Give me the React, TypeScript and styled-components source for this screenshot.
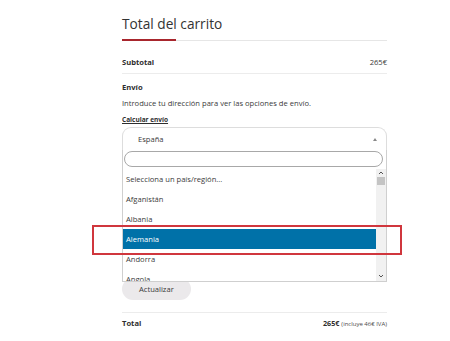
import styled, { createGlobalStyle } from 'styled-components';

const GlobalStyle = createGlobalStyle`
  body {
    margin: 0;
    background: #ffffff;
    font-family: "Open Sans", "Liberation Sans", sans-serif;
    color: #3a3a3a;
  }
`;

const Page = styled.div`
  position: relative;
  width: 450px;
  height: 341px;
  overflow: hidden;
  background: #ffffff;
`;

const Column = styled.div`
  width: 265px;
  margin-left: 122px;
`;

const TitleWrap = styled.div`
  position: relative;
  padding: 15px 0 8px;
  border-bottom: 1px solid #e6e6e6;
  &::after {
    content: '';
    position: absolute;
    left: 0;
    bottom: -1px;
    width: 54px;
    height: 2px;
    background: #a8262d;
  }
`;

const Title = styled.h2`
  margin: 0;
  font-size: 13.7px;
  line-height: 17px;
  font-weight: 400;
  color: #333333;
`;

const Row = styled.div<{ $top: number; $bottom: number; $border?: boolean }>`
  display: flex;
  justify-content: space-between;
  align-items: baseline;
  padding: ${(p) => p.$top}px 0 ${(p) => p.$bottom}px;
  line-height: 10px;
  font-size: 7.6px;
  border-bottom: ${(p) => (p.$border ? '1px solid #ececec' : 'none')};
`;

const Strong = styled.span`
  font-weight: 700;
  color: #2e2e2e;
`;

const Amount = styled.span`
  color: #3a3a3a;
`;

const Shipping = styled.div`
  padding: 8px 0 12px;
  border-bottom: 1px solid #ececec;
  font-size: 7.6px;
  line-height: 10px;
`;

const Label = styled.div`
  font-weight: 700;
  color: #2e2e2e;
`;

const Note = styled.p`
  margin: 6px 0 0;
  color: #3a3a3a;
`;

const CalcLink = styled.a`
  display: inline-block;
  margin-top: 7px;
  font-size: 6.5px;
  font-weight: 700;
  color: #2e2e2e;
  text-decoration: underline;
  text-underline-offset: 1px;
`;

const Form = styled.div`
  display: flex;
  flex-direction: column;
  gap: 10px;
  margin-top: 2px;
`;

const SelectWrap = styled.div`
  position: relative;
  z-index: 10;
`;

const SelectBox = styled.div`
  display: flex;
  align-items: center;
  justify-content: space-between;
  box-sizing: border-box;
  height: 23px;
  padding: 0 9px 0 15px;
  border: 1px solid #dddddd;
  border-bottom: none;
  border-radius: 9px 9px 0 0;
  color: #3a3a3a;
  font-size: 7.6px;
`;

const Caret = styled.span`
  width: 0;
  height: 0;
  border-left: 2px solid transparent;
  border-right: 2px solid transparent;
  border-bottom: 3px solid #888888;
`;

const Dropdown = styled.div`
  position: absolute;
  top: 100%;
  left: 0;
  right: 0;
  box-sizing: border-box;
  height: 132px;
  background: #ffffff;
  border: 1px solid #cfcfcf;
  border-top: none;
  display: flex;
  flex-direction: column;
`;

const SearchWrap = styled.div`
  padding: 1px 3px 2px 1px;
`;

const Search = styled.input`
  display: block;
  box-sizing: border-box;
  width: 100%;
  height: 16px;
  border: 1px solid #a8a8a8;
  border-radius: 8px;
  outline: none;
  background: #ffffff;
`;

const ListArea = styled.div`
  flex: 1;
  display: flex;
  overflow: hidden;
`;

const Options = styled.ul`
  flex: 1;
  margin: 0;
  padding: 0;
  list-style: none;
`;

const Option = styled.li<{ $active?: boolean }>`
  height: 20px;
  line-height: 20px;
  padding-left: 3px;
  font-size: 7.6px;
  color: ${(p) => (p.$active ? '#ffffff' : '#3a3a3a')};
  background: ${(p) => (p.$active ? '#0071a8' : 'transparent')};
  white-space: nowrap;
`;

const Scrollbar = styled.div`
  width: 10px;
  display: flex;
  flex-direction: column;
  align-items: center;
  background: #f1f1f1;
  padding: 2px 0 3px;
  box-sizing: border-box;
`;

const Thumb = styled.div`
  width: 8px;
  height: 8px;
  margin-top: 2px;
  background: #c4c4c4;
`;

const Spacer = styled.div`
  flex: 1;
`;

const Field = styled.div`
  height: 23px;
  border: 1px solid #dddddd;
  border-radius: 8px;
  box-sizing: border-box;
`;

const Button = styled.button`
  align-self: flex-start;
  margin-top: 19px;
  height: 22px;
  padding: 0 17px;
  border: none;
  border-radius: 11px;
  background: #ebe9eb;
  color: #3a3a3a;
  font-family: inherit;
  font-size: 7.6px;
`;

const TotalRight = styled.span`
  font-weight: 700;
  color: #2e2e2e;
  font-size: 7.2px;
`;

const Small = styled.small`
  font-weight: 400;
  font-size: 6px;
  color: #4a4a4a;
  margin-left: 2px;
`;

const Highlight = styled.div`
  position: absolute;
  left: 92px;
  top: 225px;
  width: 310px;
  height: 30px;
  box-sizing: border-box;
  border: 2px solid #d0363d;
  pointer-events: none;
  z-index: 20;
`;

const Chevron = ({ up }: { up?: boolean }) => (
  <svg width="6" height="4" viewBox="0 0 6 4">
    <polyline
      points={up ? '1,3 3,1 5,3' : '1,1 3,3 5,1'}
      fill="none"
      stroke="#555"
      strokeWidth="1"
    />
  </svg>
);

const countries = ['Selecciona un país/región...', 'Afganistán', 'Albania', 'Alemania', 'Andorra', 'Angola'];

export default function App() {
  return (
    <Page>
      <GlobalStyle />
      <Column>
        <TitleWrap>
          <Title>Total del carrito</Title>
        </TitleWrap>
        <Row $top={16} $bottom={6} $border>
          <Strong>Subtotal</Strong>
          <Amount>265€</Amount>
        </Row>
        <Shipping>
          <Label>Envío</Label>
          <Note>Introduce tu dirección para ver las opciones de envío.</Note>
          <CalcLink>Calcular envío</CalcLink>
          <Form>
            <SelectWrap>
              <SelectBox>
                <span>España</span>
                <Caret />
              </SelectBox>
              <Dropdown>
                <SearchWrap>
                  <Search />
                </SearchWrap>
                <ListArea>
                  <Options>
                    {countries.map((c) => (
                      <Option key={c} $active={c === 'Alemania'}>
                        {c}
                      </Option>
                    ))}
                  </Options>
                  <Scrollbar>
                    <Chevron up />
                    <Thumb />
                    <Spacer />
                    <Chevron />
                  </Scrollbar>
                </ListArea>
              </Dropdown>
            </SelectWrap>
            <Field />
            <Field />
            <Field />
            <Button>Actualizar</Button>
          </Form>
        </Shipping>
        <Row $top={5} $bottom={8}>
          <Strong>Total</Strong>
          <TotalRight>
            265€<Small>(incluye 46€ IVA)</Small>
          </TotalRight>
        </Row>
      </Column>
      <Highlight />
    </Page>
  );
}
